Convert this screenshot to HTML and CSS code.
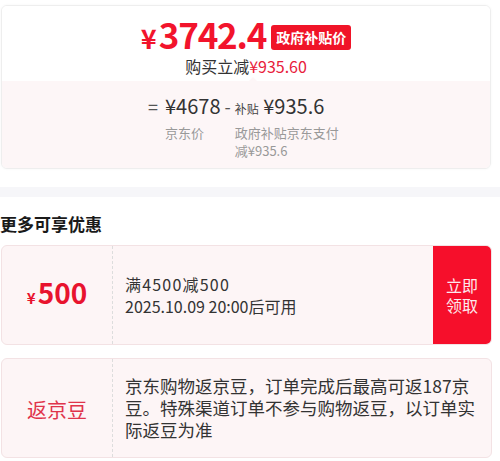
FILE: index.html
```html
<!DOCTYPE html>
<html lang="zh-CN">

<head>
    <meta charset="UTF-8">
    <meta name="viewport" content="width=device-width, initial-scale=1.0">
    <title>政府补贴价</title>
    <link rel="stylesheet" href="styles.css">
</head>

<body>
    <div class="summary">
        <div class="price-card">
            <div class="price-top">
                <div class="price-row">
                    <span class="price"><span class="yen">¥</span>3742.4</span>
                    <span class="badge">政府补贴价</span>
                </div>
                <div class="cut">购买立减<span class="red">¥935.60</span></div>
            </div>
            <div class="price-bottom">
                <div class="formula">
                    <span class="op eq">=</span>
                    <span class="num">¥4678</span>
                    <span class="op">-</span>
                    <span class="num"><small>补贴</small> ¥935.6</span>
                    <span></span>
                    <span class="note">京东价</span>
                    <span></span>
                    <span class="note note-wide">政府补贴京东支付减¥935.6</span>
                </div>
            </div>
        </div>
    </div>

    <div class="band"></div>

    <div class="more">
        <h3>更多可享优惠</h3>

        <div class="deal">
            <div class="deal-left coupon-value"><span class="yen">¥</span>500</div>
            <div class="deal-info">
                <p class="rule">满4500减500</p>
                <p>2025.10.09 20:00后可用</p>
            </div>
            <button class="grab">立即<br>领取</button>
        </div>

        <div class="deal">
            <div class="deal-left beans">返京豆</div>
            <div class="deal-info">
                <p class="desc">京东购物返京豆，订单完成后最高可返187京豆。特殊渠道订单不参与购物返豆，以订单实际返豆为准</p>
            </div>
        </div>
    </div>
</body>

</html>
```

FILE: styles.css
```css
body {
    font-family: "Noto Sans CJK SC", "Noto Sans", sans-serif;
    background-color: #fff;
    color: #333;
    margin: 0;
    padding: 0;
}

.summary {
    padding: 5px 9px 0 1px;
}

.price-card {
    border: 1px solid #eeeeee;
    border-radius: 6px;
    overflow: hidden;
    box-shadow: 0 0 3px rgba(0, 0, 0, 0.04);
}

.price-top {
    padding: 9px 0 6px;
    text-align: center;
    background-color: #fff;
}

.price-row {
    display: flex;
    align-items: center;
    justify-content: center;
    gap: 5px;
    height: 42px;
}

.price {
    color: #f2142c;
    font-size: 35px;
    font-weight: bold;
    line-height: 42px;
    letter-spacing: -1.2px;
}

.price .yen {
    font-size: 27px;
    margin-right: 2px;
    letter-spacing: 0;
}

.badge {
    background-color: #f01428;
    color: #fff;
    font-size: 14px;
    font-weight: bold;
    line-height: 25px;
    padding: 0 5px;
    border-radius: 3px;
    margin-top: 2px;
}

.cut {
    font-size: 16px;
    line-height: 18px;
}

.red {
    color: #e8203a;
}

.price-bottom {
    position: relative;
    background-color: #fdf6f7;
    padding: 12px 0 8px 146px;
}

.price-bottom::before {
    content: "";
    position: absolute;
    top: -4px;
    left: 247px;
    border-left: 4px solid transparent;
    border-right: 4px solid transparent;
    border-bottom: 4px solid #fdf6f7;
}

.formula {
    display: inline-grid;
    grid-template-columns: auto auto auto auto;
    column-gap: 4px;
    row-gap: 2px;
}

.formula .op {
    font-size: 18px;
    line-height: 26px;
    color: #555;
}

.formula .eq {
    margin-right: 3px;
}

.formula .num {
    font-size: 20px;
    line-height: 26px;
    color: #333;
}

.formula small {
    font-size: 12px;
    color: #444;
}

.note {
    font-size: 13px;
    line-height: 18px;
    color: #999;
}

.note-wide {
    width: 106px;
}

.band {
    height: 10px;
    margin-top: 18px;
    background-color: #f6f6f9;
}

.more {
    padding: 0 8px 0 1px;
}

h3 {
    font-size: 17px;
    line-height: 24px;
    font-weight: bold;
    color: #1a1a1a;
    margin: 15px 0 9px -1px;
}

.deal {
    display: flex;
    height: 98px;
    background-color: #fdf5f6;
    border: 1px solid #f3e2e4;
    border-radius: 6px;
    margin-bottom: 13px;
    overflow: hidden;
}

.deal-left {
    width: 110px;
    display: flex;
    align-items: center;
    justify-content: center;
    flex-shrink: 0;
}

.coupon-value {
    color: #e8132e;
    font-size: 28px;
    font-weight: bold;
    align-items: baseline;
    padding-top: 26px;
    box-sizing: border-box;
    height: 98px;
}

.coupon-value .yen {
    font-size: 15px;
    margin-right: 2px;
}

.beans {
    color: #e0344b;
    font-size: 20px;
    padding-top: 3px;
    box-sizing: border-box;
}

.deal-info {
    flex: 1;
    border-left: 1px dashed #ddd;
    padding: 0 10px 0 12px;
    display: flex;
    flex-direction: column;
    justify-content: center;
    font-size: 16px;
    line-height: 22px;
    color: #333;
}

.deal-info p {
    margin: 0;
}

.deal-info .rule {
    letter-spacing: 1.2px;
}

.deal-info .desc {
    font-size: 17.5px;
}

.grab {
    width: 58px;
    flex-shrink: 0;
    background-color: #f60f2b;
    color: #fde9ec;
    border: none;
    font-family: inherit;
    font-size: 16px;
    line-height: 20px;
    padding: 0;
    cursor: pointer;
}
```
